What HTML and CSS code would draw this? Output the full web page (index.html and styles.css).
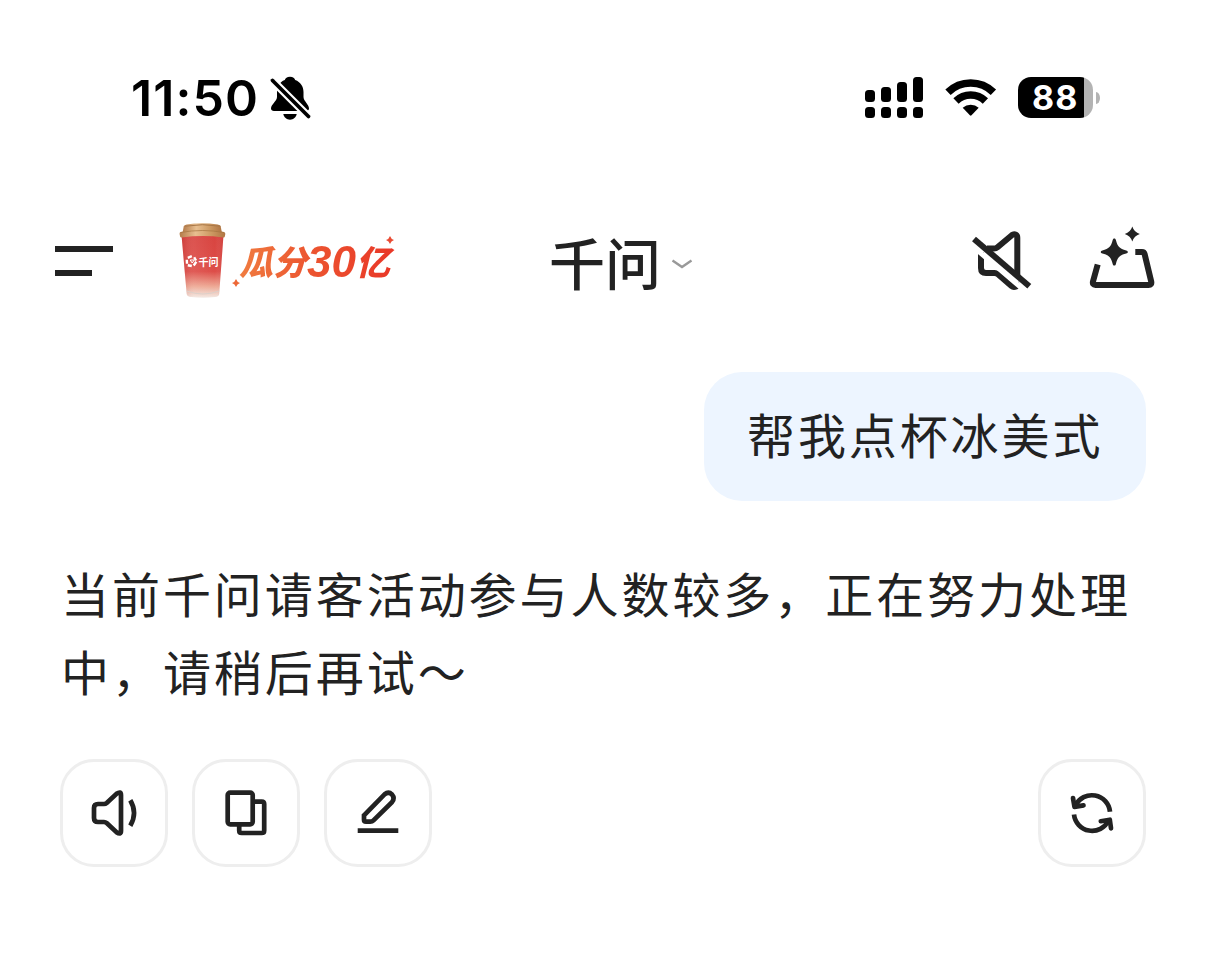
FILE: index.html
```html
<!DOCTYPE html>
<html lang="zh-CN">

<head>
  <meta charset="UTF-8" />
  <title>千问</title>
  <link rel="stylesheet" href="styles.css">
</head>

<body>
  <div class="status-bar">
    <span class="time">11:50</span>
    <svg class="bell" width="46" height="48" viewBox="0 0 46 48">
      <path d="M22 2.700c-3 0-4.700 1.400-5.200 3.300C11.500 8 9 12.500 9 18v5c0 4-6 7.500-6 11.500C3 36 4.200 37 6 37h32c1.800 0 3-1 3-2.500 0-4-5.500-7.500-5.500-11.500v-5c0-5.500-3-10-8.300-12C26.700 4.100 25 2.700 22 2.700z" />
      <path d="M15.300 40h13.400c-.6 3.400-3.300 5.700-6.700 5.700s-6.100-2.300-6.700-5.700z" />
      <path d="M2 4l41 41" stroke="#fff" stroke-width="8" />
      <path d="M4.500 6.500l36 36" stroke="#000" stroke-width="3.800" stroke-linecap="round" />
    </svg>
    <svg class="signal" width="59" height="41" viewBox="0 0 59 41">
      <rect x="0" y="13" width="10" height="12" rx="3.500" />
      <rect x="16" y="10" width="10" height="15" rx="3.500" />
      <rect x="32" y="5" width="10" height="20" rx="3.500" />
      <rect x="48" y="0" width="10" height="25" rx="3.500" />
      <rect x="0" y="30" width="10" height="11" rx="3.500" />
      <rect x="16" y="30" width="10" height="11" rx="3.500" />
      <rect x="32" y="30" width="10" height="11" rx="3.500" />
      <rect x="48" y="30" width="10" height="11" rx="3.500" />
    </svg>
    <svg class="wifi" width="52" height="41" viewBox="0 0 52 41">
      <path d="M3 15.200a32.500 32.500 0 0 1 45.400 0" fill="none" stroke="#000" stroke-width="7.600" />
      <path d="M11 24a21 21 0 0 1 29.400 0" fill="none" stroke="#000" stroke-width="7.500" />
      <path d="M17.700 30.700a12 12 0 0 1 16 0l-7.200 7.600q-.8.8-1.600 0z" />
    </svg>
    <div class="battery"><span>88</span></div>
    <div class="battery-tip"></div>
  </div>

  <div class="header">
    <svg class="menu" width="58" height="30" viewBox="0 0 58 30">
      <path d="M0 0h58v6H0zM0 24h37v6H0z" />
    </svg>

    <div class="promo">
      <svg class="cup" width="48" height="76" viewBox="0 0 48 76">
        <defs>
          <linearGradient id="cupBody" x1="0" y1="0" x2="0" y2="1">
            <stop offset="0" stop-color="#d84440" />
            <stop offset=".58" stop-color="#dd4d48" />
            <stop offset=".82" stop-color="#eea995" />
            <stop offset="1" stop-color="#f3e9e3" />
          </linearGradient>
          <linearGradient id="cupLid" x1="0" y1="0" x2="1" y2="0">
            <stop offset="0" stop-color="#b47b4a" />
            <stop offset=".35" stop-color="#e8bf90" />
            <stop offset=".7" stop-color="#cc9962" />
            <stop offset="1" stop-color="#b07543" />
          </linearGradient>
          <linearGradient id="cupShade" x1="0" y1="0" x2="1" y2="0">
            <stop offset="0" stop-color="#a31f1f" stop-opacity=".2" />
            <stop offset=".3" stop-color="#fff" stop-opacity=".08" />
            <stop offset=".8" stop-color="#fff" stop-opacity="0" />
            <stop offset="1" stop-color="#a31f1f" stop-opacity=".15" />
          </linearGradient>
        </defs>
        <path d="M2.500 12h42l-4.300 59q-.3 2.500-4 3-12 1.600-24 0-4.200-.5-4.500-3z" fill="url(#cupBody)" />
        <path d="M2.500 12h42l-4.300 59q-.3 2.500-4 3-12 1.600-24 0-4.200-.5-4.500-3z" fill="url(#cupShade)" />
        <path d="M7.700 68q16 6 32.600 0" fill="none" stroke="#ddd0ca" stroke-width="1" />
        <path d="M3.500 10L4.700 3.500q.4-1.500 3-2 15-2.400 31 0 2.600.4 3 2L43 10z" fill="url(#cupLid)" />
        <path d="M6 3.200q17.500-3 35.500 0" fill="none" stroke="#a97848" stroke-width="1" />
        <path d="M1.500 9q22-4 43.500 0 1.500.4 1.300 2l-.5 2.500q-.2 1.200-1.500 1-20.500-2.800-41.600 0-1.400.2-1.600-1l-.5-2.500q-.2-1.700.9-2z" fill="url(#cupLid)" />
        <path d="M1.500 9.500q22-4 43.500 0" fill="none" stroke="#a4723f" stroke-width=".7" />
        <g fill="none" stroke="#fff" stroke-width="2.400">
          <path d="M8.800 34.800l4-1.600M15.200 34.200l1.800 3.300M17.300 38.800l-2.600 3.700M12.800 43l-4-.8M8 40.800l-.2-4" />
          <path d="M11.200 37h4l-2 3z" stroke-width="1" />
        </g>
        <text class="cup-text" x="19.500" y="42.500">千问</text>
      </svg>
      <span class="promo-text">瓜分<b>30</b>亿</span>
      <svg class="spark spark-left" width="8" height="8" viewBox="-4 -4 8 8">
        <path d="M0-4Q1-1 4 0 1 1 0 4-1 1-4 0-1-1 0-4z" fill="#ed6837" />
      </svg>
      <svg class="spark spark-right" width="8" height="8" viewBox="-4 -4 8 8">
        <path d="M0-4Q1-1 4 0 1 1 0 4-1 1-4 0-1-1 0-4z" fill="#e94b33" />
      </svg>
    </div>

    <div class="title">
      <h1>千问</h1>
      <svg class="chevron" width="22" height="12" viewBox="0 0 22 12">
        <path d="M1.500 2.500L11 9l9.500-6.500" fill="none" stroke="#999" stroke-width="2.400" />
      </svg>
    </div>

    <svg class="mute" width="66" height="70" viewBox="0 0 66 70">
      <g fill="none" stroke="#222" stroke-width="6">
        <path d="M17 22.500h7q2 0 3.500-1.300L41.800 9.200q2-1.600 4-.5 1.500.8 1.500 3V51" />
        <path d="M11 26v16q0 5 5 5h8.500q2 0 3.500 1.200L41.500 60q2 1.700 4.500.5l4-2.500" />
        <path class="cut" d="M3 20.500l52 44.500" />
        <path d="M4 13l55.300 47.300" />
      </g>
    </svg>
    <svg class="tray" width="72" height="70" viewBox="0 0 72 70">
      <path d="M12.700 44.500L8 61.500Q7.200 65 10.500 65h53q3.500 0 2.700-3.500L59.600 34q-.5-2-2.600-2h-6.700" fill="none" stroke="#222" stroke-width="6" />
      <path d="M29.300 18.500c1 0 1.300.7 1.600 1.600 1.700 6.700 3.600 8.600 10.300 10.300.9.300 1.600.6 1.600 1.600s-.7 1.300-1.600 1.600c-6.700 1.700-8.600 3.600-10.300 10.300-.3.900-.6 1.600-1.600 1.600s-1.300-.7-1.600-1.600c-1.700-6.700-3.600-8.600-10.300-10.300-.9-.3-1.600-.6-1.600-1.600s.7-1.300 1.600-1.600c6.700-1.700 8.600-3.600 10.300-10.300.3-.9.600-1.600 1.600-1.600z" />
      <path d="M47.300 6.500q1.800 5.700 7.500 7.500-5.700 1.800-7.500 7.500-1.800-5.700-7.500-7.500 5.700-1.800 7.500-7.500z" />
    </svg>
  </div>

  <div class="chat">
    <div class="bubble">帮我点杯冰美式</div>
    <p class="reply">当前千问请客活动参与人数较多，正在努力处理中，请稍后再试～</p>

    <div class="actions">
      <button>
        <svg viewBox="3 3 102 102">
          <path d="M38 45h6q1.500 0 2.700-1L56.500 34.800q4.500-3 4.500 1.200v36q0 4.200-4.500 1.200L46.700 64q-1.200-1-2.700-1h-6q-4 0-4-4V49q0-4 4-4z" />
          <path d="M70.300 41.300q7.500 12.700 0 25.400" />
        </svg>
      </button>
      <button>
        <svg viewBox="3 3 102 102">
          <rect x="35.700" y="33.600" width="25" height="31.700" rx="2.500" />
          <path d="M60.700 42.600h9q2.500 0 2.500 2.500v26.400q0 2.500-2.500 2.500h-20q-2.500 0-2.500-2.500v-6.200" />
        </svg>
      </button>
      <button>
        <svg viewBox="3 3 102 102">
          <path d="M40 56.300L60.500 35.400q4-3.200 7.500 0 3.200 3.800 0 7.700L49.500 61.400q-1.300 1.300-3.300 1.300H42q-2 0-2-2z" />
          <path d="M33.700 71.700h40.600" />
        </svg>
      </button>
      <button class="refresh">
        <svg viewBox="3 3 102 102">
          <path d="M72 52.800A18.200 18.200 0 0 0 37.500 46.500" />
          <path d="M36 55.500A18.200 18.200 0 0 0 70.500 61.500" />
          <path class="arrow" d="M35 39l1.500 8.900 9-1.500M62.800 62.200l9-1.500 1.200 8.600" />
        </svg>
      </button>
    </div>
  </div>
</body>

</html>
```
FILE: styles.css
```css
* {
  box-sizing: border-box;
}

body {
  margin: 0;
  background: #fff;
  color: #222;
  font-family: "Noto Sans CJK SC", sans-serif;
}

svg {
  display: block;
  flex-shrink: 0;
}

/* 状态栏 */
.status-bar {
  display: flex;
  align-items: center;
  height: 195px;
  padding-left: 131px;
  color: #000;
}

.time {
  width: 137px;
  font-family: Inter, sans-serif;
  font-size: 50px;
  font-weight: 600;
  letter-spacing: 1.1px;
  line-height: 60px;
}

.signal {
  margin-left: 551px;
}

.wifi {
  margin-left: 21px;
}

.battery {
  width: 75px;
  height: 41px;
  margin-left: 21px;
  padding-left: 14px;
  border-radius: 13px;
  background: linear-gradient(to right, #000 66px, #b3b3b3 66px);
  color: #fff;
  font-family: Inter, sans-serif;
  font-size: 34px;
  font-weight: 700;
  letter-spacing: 1.2px;
  line-height: 42px;
}

.battery-tip {
  width: 4px;
  height: 12px;
  margin-left: 3px;
  border-radius: 0 4px 4px 0 / 0 6px 6px 0;
  background: #b3b3b3;
}

/* 顶部导航 */
.header {
  display: flex;
  align-items: center;
  height: 132px;
  padding-left: 55px;
  fill: #222;
}

.promo {
  position: relative;
  display: flex;
  align-items: center;
  width: 221px;
  margin-left: 66px;
}

.promo-text {
  margin: 0 0 0 12px;
  padding-right: 6px;
  background: linear-gradient(to right, #f07c40, #ec5530 45%, #e93627);
  -webkit-background-clip: text;
  background-clip: text;
  color: transparent;
  font-size: 34px;
  font-style: italic;
  font-weight: 900;
  line-height: 50px;
  white-space: nowrap;
}

.promo-text b {
  font-family: "Liberation Sans", sans-serif;
  font-size: 44px;
  line-height: 1;
  vertical-align: -2px;
}

.cup-text {
  fill: #fff;
  font-size: 10px;
  font-weight: 700;
}

.spark {
  position: absolute;
}

.spark-left {
  left: 53px;
  top: 56px;
}

.spark-right {
  left: 207px;
  top: 13px;
}

.title {
  display: flex;
  align-items: center;
  width: 147px;
  margin-left: 148px;
}

.title h1 {
  width: 124px;
  margin: -1px 0 0;
  padding-left: 1px;
  font-size: 56px;
  font-weight: 500;
  line-height: 80px;
}

.chevron {
  margin: 6px 0 0 -1px;
}

.mute {
  margin-left: 275px;
}

.mute .cut {
  stroke: #fff;
  stroke-width: 5px;
}

.tray {
  margin: 0 0 12px 49px;
}

/* 对话 */
.chat {
  display: flex;
  flex-direction: column;
  padding: 45px 60px 0;
}

.bubble {
  align-self: flex-end;
  width: 442px;
  height: 129px;
  padding-left: 43px;
  border-radius: 38px;
  background: #edf5ff;
  font-size: 48px;
  letter-spacing: 2.9px;
  line-height: 123px;
}

.reply {
  width: 1086px;
  margin: 52px 0 0;
  padding-left: 1px;
  font-size: 48px;
  letter-spacing: 2.95px;
  line-height: 78px;
  word-break: break-all;
}

.actions {
  display: flex;
  gap: 24px;
  margin-top: 50px;
}

.actions button {
  width: 108px;
  height: 108px;
  padding: 0;
  border: 3px solid #eee;
  border-radius: 34px;
  background: #fff;
}

.actions svg {
  width: 102px;
  height: 102px;
  fill: none;
  stroke: #222;
  stroke-width: 4.7px;
}

.actions .arrow {
  stroke-linecap: round;
  stroke-linejoin: round;
}

.actions .refresh {
  margin-left: auto;
}
```
